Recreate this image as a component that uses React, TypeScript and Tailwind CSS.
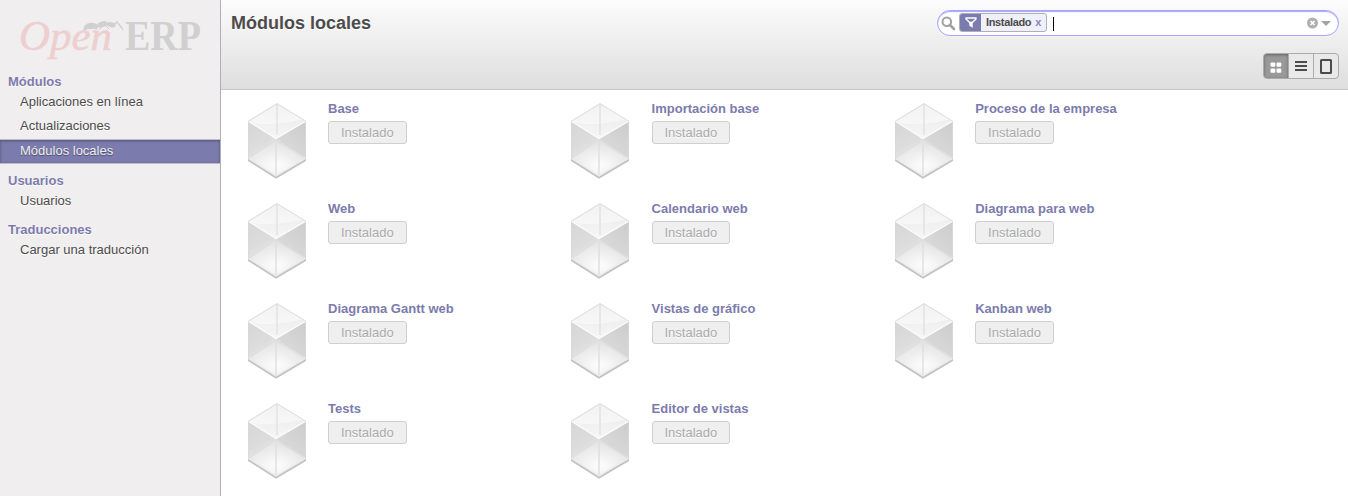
type Section = { title: string; items: string[] };

const sections: Section[] = [
  { title: "Módulos", items: ["Aplicaciones en línea", "Actualizaciones", "Módulos locales"] },
  { title: "Usuarios", items: ["Usuarios"] },
  { title: "Traducciones", items: ["Cargar una traducción"] },
];

const modules = [
  "Base",
  "Importación base",
  "Proceso de la empresa",
  "Web",
  "Calendario web",
  "Diagrama para web",
  "Diagrama Gantt web",
  "Vistas de gráfico",
  "Kanban web",
  "Tests",
  "Editor de vistas",
];

function Logo() {
  return (
    <svg width="220" height="70" viewBox="0 0 220 70" className="block shrink-0" aria-label="Open ERP">
      <g fontFamily="'Liberation Serif', serif">
        <text x="19" y="50" fontSize="42" fontStyle="italic" fill="#edcfcf" stroke="#edcfcf" strokeWidth="0.5" textLength="93" lengthAdjust="spacingAndGlyphs">Open</text>
        <text x="125" y="50" fontSize="42" fontWeight="bold" fill="#d0d0d1" textLength="76" lengthAdjust="spacingAndGlyphs">ERP</text>
      </g>
      <g fill="#d0d0d1">
        <path d="M83.500 30.500c-.5-4.500 3-7.800 8-7.800 3 0 5.500 1 7.500 3.300-1 2.200-3 3-6 3-4 0-6 .2-9.500 1.500z" />
        <ellipse cx="102.500" cy="24.300" rx="5" ry="2.900" transform="rotate(-15 102.500 24.300)" />
        <ellipse cx="111" cy="24.800" rx="4.600" ry="2.500" transform="rotate(12 111 24.800)" />
        <path d="M99 26l-4 4.500M103 26l-4 3.500M106 26l3 3" stroke="#d0d0d1" strokeWidth="1" fill="none" />
        <path d="M113.500 25l3.500-3 6 7.500" stroke="#d0d0d1" strokeWidth="1.300" fill="none" />
      </g>
    </svg>
  );
}

function Sidebar() {
  return (
    <aside className="flex h-[496px] w-[221px] shrink-0 flex-col border-r border-[#afafb6] bg-[#f0eeee]">
      <Logo />
      {sections.map((s) => (
        <nav key={s.title} className="mb-[5px] [text-shadow:0_1px_1px_#fff]">
          <h2 className="flex h-5 items-center pt-[3px] pl-2 text-[13px] font-bold text-[#7c7bad]">{s.title}</h2>
          {s.items.map((item) =>
            item === "Módulos locales" ? (
              <div key={item} className="mt-[1px] flex h-[25px] items-center border-y border-[#bdbccb] bg-[#7c7bad] pb-px pl-5 text-[13px] text-[#eee] [box-shadow:inset_0_1px_3px_rgba(0,0,0,0.35)] [text-shadow:0_1px_1px_rgba(0,0,0,0.4)]">
                {item}
              </div>
            ) : (
              <div key={item} className="flex h-6 items-center pb-px pl-5 text-[13px] text-[#4c4c4c]">{item}</div>
            ),
          )}
        </nav>
      ))}
    </aside>
  );
}

function SearchBox() {
  return (
    <div className="flex h-[26px] w-[402px] items-center rounded-full border border-[#a6a6fe] bg-white pl-[3px] [box-shadow:inset_0_1px_1px_#a6a6fe]">
      <svg width="15" height="15" viewBox="0 0 15 15" fill="none" stroke="#a0a0a0">
        <circle cx="5.800" cy="5.800" r="4.300" strokeWidth="2" />
        <path d="M9 9l4 4" strokeWidth="2.700" strokeLinecap="round" />
      </svg>
      <div className="mb-[2px] ml-[3px] flex h-[19px] w-[88px] items-center rounded-[3px] border border-[#afafb6] bg-[#f0f0fa] text-[11px] font-bold text-[#4c4c4c]">
        <span className="flex h-full w-[21px] shrink-0 items-center justify-center rounded-l-[2px] bg-[#7c7bad]">
          <svg width="12" height="11" viewBox="0 0 12 11">
            <path d="M1 1h10v1L7.300 5.500H4.700L1 2z" fill="none" stroke="white" strokeWidth="1.400" strokeLinejoin="round" />
            <path d="M4.300 5h3.400v5.700l-3.400-2z" fill="white" />
          </svg>
        </span>
        <span className="ml-[5px] tracking-[-0.35px]">Instalado</span>
        <span className="ml-[4px] text-[#8786b7]">x</span>
      </div>
      <span className="mt-[2px] ml-[6px] h-[14px] w-px bg-black" />
      <svg width="26" height="12" viewBox="0 0 26 12" className="mr-[6px] ml-auto">
        <circle cx="6.500" cy="6" r="5.500" fill="#b0b0b0" />
        <path d="M4.500 4l4 4M8.500 4l-4 4" stroke="white" strokeWidth="1.600" />
        <path d="M15 4h10L20 9z" fill="#a3a3a3" />
      </svg>
    </div>
  );
}

function ViewSwitcher() {
  return (
    <div className="flex h-[26px] w-[76px] overflow-hidden rounded-[4px] border border-[#ababab] bg-[#e9e9e9]">
      <span className="flex w-[25px] items-center justify-center border-r border-[#ababab] bg-[#999] [box-shadow:inset_0_1px_3px_rgba(0,0,0,0.35)]">
        <svg width="12" height="12" viewBox="0 0 12 12" fill="#fff" className="mt-[3px]">
          <rect x="0.500" y="0.500" width="4.800" height="4.300" rx="1" />
          <rect x="6.500" y="0.500" width="4.800" height="4.300" rx="1" />
          <rect x="0.500" y="6.500" width="4.800" height="4.300" rx="1" />
          <rect x="6.500" y="6.500" width="4.800" height="4.300" rx="1" />
        </svg>
      </span>
      <span className="flex w-[25px] items-center justify-center border-r border-[#ababab]">
        <svg width="12" height="10" viewBox="0 0 12 10" fill="#4c4c4c">
          <rect y="0" width="12" height="2" />
          <rect y="4" width="12" height="2" />
          <rect y="8" width="12" height="2" />
        </svg>
      </span>
      <span className="flex w-6 items-center justify-center">
        <svg width="12" height="15" viewBox="0 0 12 15">
          <rect x="1" y="1" width="10" height="13" rx="0.500" fill="none" stroke="#4c4c4c" strokeWidth="2" />
        </svg>
      </span>
    </div>
  );
}

function CubeDefs() {
  return (
    <svg width="0" height="0" className="absolute">
      <defs>
        <linearGradient id="cube-left" x1="0" y1="0" x2="0.300" y2="1">
          <stop offset="0" stopColor="#d6d6d6" />
          <stop offset="0.500" stopColor="#dcdcdc" />
          <stop offset="1" stopColor="#f1f1f1" />
        </linearGradient>
        <linearGradient id="cube-right" x1="0.800" y1="0" x2="0.300" y2="1">
          <stop offset="0" stopColor="#cdcdcd" />
          <stop offset="0.550" stopColor="#d8d8d8" />
          <stop offset="1" stopColor="#f4f4f4" />
        </linearGradient>
        <linearGradient id="cube-top" x1="0" y1="0" x2="0" y2="1">
          <stop offset="0" stopColor="#e8e8e8" />
          <stop offset="1" stopColor="#f6f6f6" />
        </linearGradient>
        <radialGradient id="cube-floor" cx="0.500" cy="0.700" r="0.600">
          <stop offset="0" stopColor="#ffffff" />
          <stop offset="1" stopColor="#e6e6e6" />
        </radialGradient>
      </defs>
    </svg>
  );
}

function Cube() {
  return (
    <svg width="60" height="78" viewBox="0 0 60 78" className="shrink-0">
      <path d="M1 55v4l28 17.800 30-17.800v-4L29 72z" fill="#c2c2c2" />
      <path d="M1 19l28 17.500v37L1 56z" fill="url(#cube-left)" />
      <path d="M59 19L29 36.500v37L59 56z" fill="url(#cube-right)" />
      <path d="M1 56l28-18 30 18-30 17.500z" fill="url(#cube-floor)" opacity="0.850" />
      <path d="M30 1.500L1 19l28 17.500 30-17.500z" fill="url(#cube-top)" />
      <path d="M30 2.500L3 19l4 2.500c18 2 36-1 49-4z" fill="#fff" opacity="0.450" />
      <path d="M30 2v31" stroke="#dedede" strokeWidth="1.200" />
      <path d="M2 56l27-18 29 18M29 38v35" fill="none" stroke="#dfdfdf" strokeWidth="1.500" />
      <path d="M1 19l28 17.500 30-17.500" fill="none" stroke="#fcfcfc" strokeWidth="1.400" />
      <path d="M1.500 56V19L30 1.500 58.500 19v37" fill="none" stroke="#d8d8d8" strokeWidth="0.800" />
      <path d="M1.500 56.500L29 74 58.500 56.500" fill="none" stroke="#eeeeee" strokeWidth="1.200" />
    </svg>
  );
}

function ModuleCard({ name }: { name: string }) {
  return (
    <article className="flex h-[100px] items-start">
      <div className="flex w-[82px] pt-px pl-[0.8px]">
        <Cube />
      </div>
      <div className="flex flex-col items-start">
        <h3 className="h-5 text-[13px] leading-[15px] font-bold whitespace-nowrap text-[#7c7bad]">{name}</h3>
        <button className="flex h-[23px] w-[78.600px] items-center justify-center rounded-[3px] border border-[#cfcfcf] bg-[#efefef] text-[13px] text-[#aaa] [text-shadow:0_1px_1px_#fff]">
          Instalado
        </button>
      </div>
    </article>
  );
}

export default function App() {
  return (
    <div className="flex h-[496px] w-[1348px] overflow-hidden bg-white font-['Liberation_Sans',sans-serif]">
      <CubeDefs />
      <Sidebar />
      <main className="flex flex-1 flex-col">
        <header className="flex h-[90px] shrink-0 justify-between border-b border-[#c8c8c8] bg-linear-to-b from-[#fcfcfc] to-[#dedede] pr-[9px] pl-[10px]">
          <h1 className="pt-[13px] text-[18px] leading-[21px] font-bold text-[#4c4c4c] [text-shadow:0_1px_1px_#fff]">Módulos locales</h1>
          <div className="flex flex-col items-end gap-[17px] pt-[10px]">
            <SearchBox />
            <ViewSwitcher />
          </div>
        </header>
        <section className="grid grid-cols-[323.600px_323.600px_323.600px] pt-[11px] pl-[25px]">
          {modules.map((m) => (
            <ModuleCard key={m} name={m} />
          ))}
        </section>
      </main>
    </div>
  );
}
